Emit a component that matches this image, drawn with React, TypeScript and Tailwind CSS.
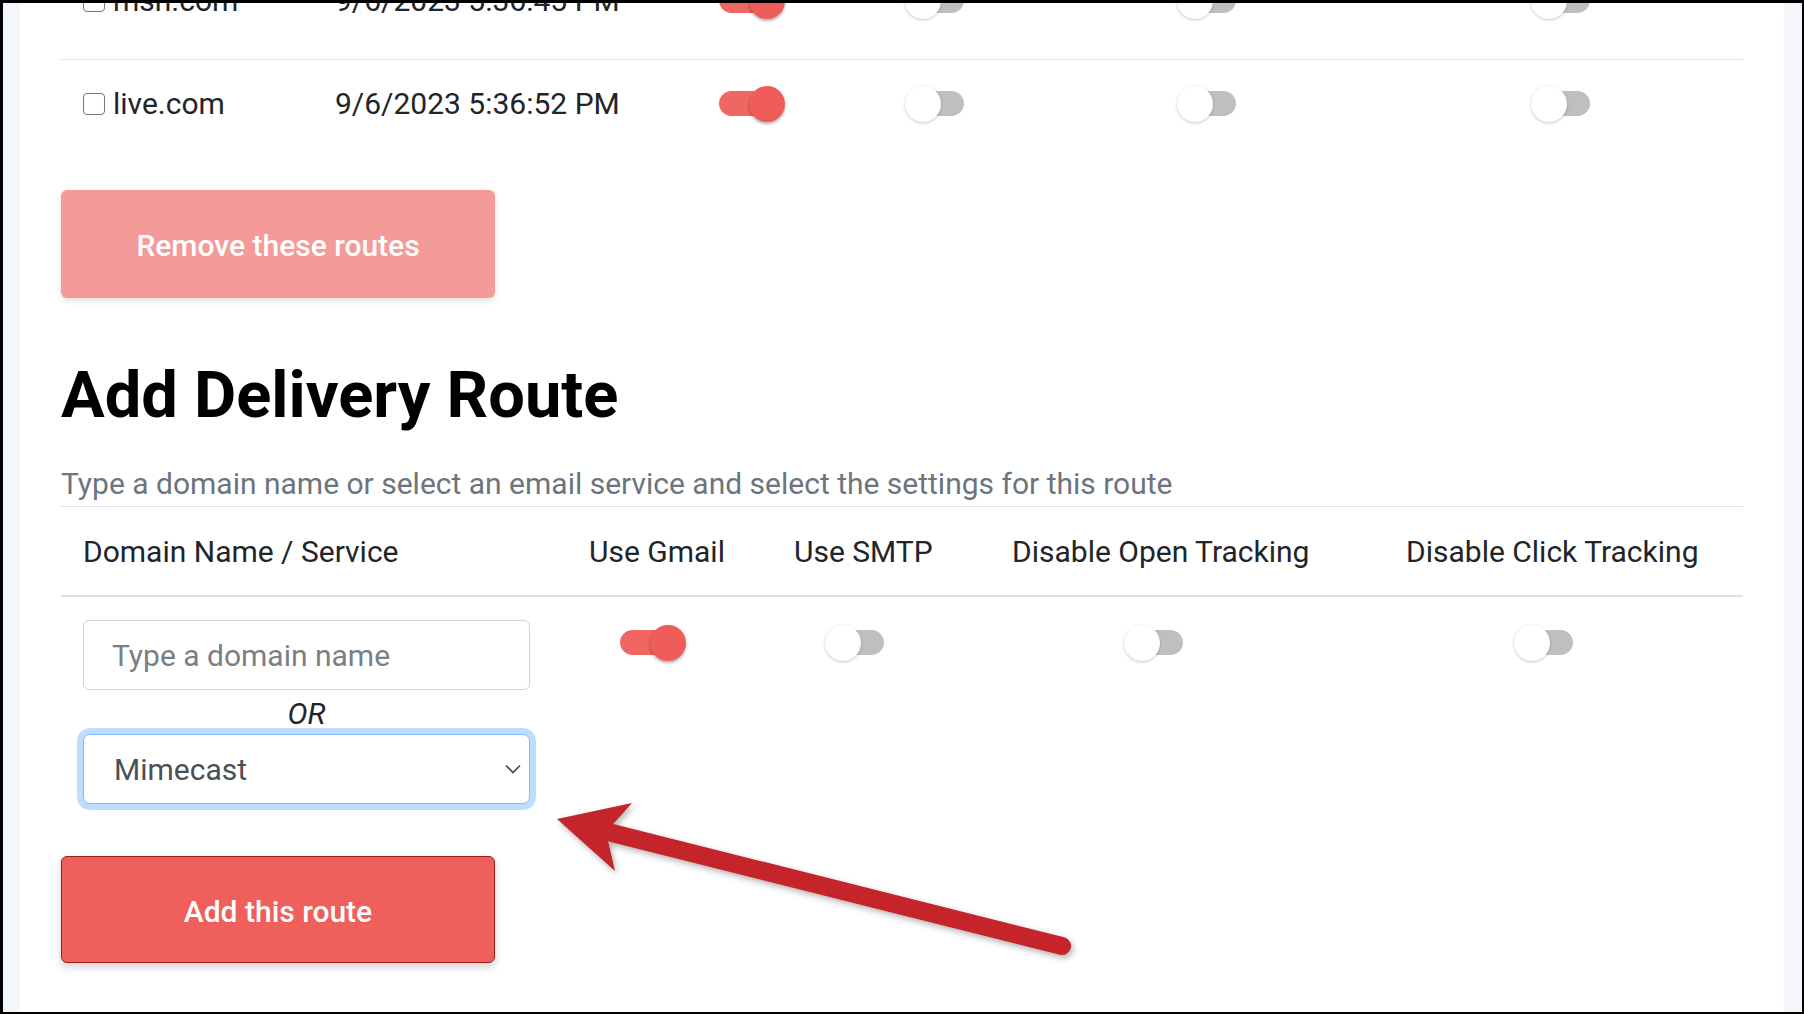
import React from "react";

function Toggle({ on }: { on: boolean }) {
  return (
    <span className="relative inline-block w-[52px] h-[25px] align-middle">
      <span
        className={
          on
            ? "absolute inset-0 rounded-full bg-[#ef6662]"
            : "absolute inset-0 rounded-full bg-[#bfbfbf]"
        }
      />
      <span
        className={
          on
            ? "absolute top-[-5.5px] left-[30px] w-[36px] h-[36px] rounded-full bg-[#ee5d59] shadow-[0_2px_3px_rgba(0,0,0,0.3)]"
            : "absolute top-[-5.5px] left-[-7px] w-[36px] h-[36px] rounded-full bg-white shadow-[0_1px_3px_rgba(0,0,0,0.22)]"
        }
      />
    </span>
  );
}

function Checkbox() {
  return (
    <span className="inline-block w-[22px] h-[22px] rounded-[4px] border-[1.5px] border-[#767676] bg-white shrink-0" />
  );
}

function RouteCells({ domain, date }: { domain: string; date: string }) {
  return (
    <div className="flex items-center h-[45px] text-[30px] leading-[45px] text-[#212529]">
      <div className="w-[252px] pl-[22px] flex items-center gap-[8px]">
        <Checkbox />
        <span>{domain}</span>
      </div>
      <div className="w-[384px] pl-[22px]">{date}</div>
      <div className="w-[193px] pl-[22px] flex items-center">
        <Toggle on />
      </div>
      <div className="w-[272px] pl-[22px] flex items-center">
        <Toggle on={false} />
      </div>
      <div className="w-[354px] pl-[22px] flex items-center">
        <Toggle on={false} />
      </div>
      <div className="flex-1 pl-[22px] flex items-center">
        <Toggle on={false} />
      </div>
    </div>
  );
}

export default function App() {
  return (
    <div className="relative w-[1804px] h-[1014px] overflow-hidden bg-black pt-[3px] pl-[3px] pr-[2px] pb-[2px] [font-family:Roboto,'Liberation_Sans',sans-serif]">
      <div className="flex h-full">
        <div className="w-[17px] h-full bg-[#f3f6fb]" />
        <main className="flex-1 h-full bg-white overflow-hidden px-[41px]">
          {/* existing routes */}
          <div className="-mt-[46px] h-[102px] pt-[21px]">
            <RouteCells domain="msn.com" date="9/6/2023 5:36:45 PM" />
          </div>
          <div className="border-t border-[#dee2e6] pt-[21px] pb-[21px]">
            <RouteCells domain="live.com" date="9/6/2023 5:36:52 PM" />
          </div>

          <button className="mt-[43px] w-[434px] h-[108px] pt-[3px] rounded-[6px] bg-[#f49a98] text-white text-[30px] font-medium shadow-[0_3px_6px_rgba(0,0,0,0.12)]">
            Remove these routes
          </button>

          <h1 className="mt-[58px] text-[65px] leading-[78px] font-bold text-black">
            Add Delivery Route
          </h1>
          <p className="mt-[27px] text-[30px] leading-[45px] text-[#6c757d]">
            Type a domain name or select an email service and select the settings for this route
          </p>

          {/* new route table */}
          <div className="border-t border-[#dee2e6]">
            <div className="flex pt-[22px] pb-[21px] border-b-2 border-[#dee2e6] text-[30px] leading-[45px] text-[#212529]">
              <div className="w-[506px] pl-[22px]">Domain Name / Service</div>
              <div className="w-[205px] pl-[22px]">Use Gmail</div>
              <div className="w-[218px] pl-[22px]">Use SMTP</div>
              <div className="w-[394px] pl-[22px]">Disable Open Tracking</div>
              <div className="flex-1 pl-[22px]">Disable Click Tracking</div>
            </div>
            <div className="flex pt-[23px] pb-[22px] text-[30px] leading-[45px]">
              <div className="w-[506px] pl-[22px]">
                <div className="w-[447px] h-[70px] rounded-[6px] border border-[#ced4da] bg-white flex items-center pl-[28px] text-[#7a7f85]">
                  Type a domain name
                </div>
                <div className="w-[447px] h-[44px] pt-[2px] flex items-center justify-center italic text-[#212529]">
                  OR
                </div>
                <div className="w-[447px] h-[70px] rounded-[7px] border border-[#80bdff] bg-white shadow-[0_0_0_6px_rgba(0,123,255,0.25)] flex items-center justify-between pl-[30px] pr-[8px] text-[#495057]">
                  <span>Mimecast</span>
                  <svg width="16" height="10" viewBox="0 0 16 10" fill="none">
                    <polyline points="1,1.5 8,8.5 15,1.5" stroke="#4a4a4a" strokeWidth="1.6" />
                  </svg>
                </div>
              </div>
              <div className="w-[205px] pl-[53px] h-[45px] flex items-center">
                <Toggle on />
              </div>
              <div className="w-[218px] pl-[60px] h-[45px] flex items-center">
                <Toggle on={false} />
              </div>
              <div className="w-[394px] pl-[141px] h-[45px] flex items-center">
                <Toggle on={false} />
              </div>
              <div className="flex-1 pl-[137px] h-[45px] flex items-center">
                <Toggle on={false} />
              </div>
            </div>
          </div>

          <button className="mt-[30px] w-[434px] h-[107px] pt-[3px] rounded-[6px] bg-[#ef605c] border border-[#9e1c1c] text-white text-[30px] font-medium shadow-[0_4px_8px_rgba(0,0,0,0.18)]">
            Add this route
          </button>
        </main>
        <div className="w-[18px] h-full bg-[#f3f6fb]" />
      </div>

      {/* annotation arrow */}
      <svg
        className="absolute left-0 top-0 pointer-events-none drop-shadow-[2px_3px_3px_rgba(0,0,0,0.3)]"
        width="1804"
        height="1014"
        viewBox="0 0 1804 1014"
      >
        <line x1="612" y1="833" x2="1062" y2="946" stroke="#c4242a" strokeWidth="18" strokeLinecap="round" />
        <polygon points="557,819 632,803 606,832 615,871" fill="#c4242a" />
      </svg>
    </div>
  );
}
